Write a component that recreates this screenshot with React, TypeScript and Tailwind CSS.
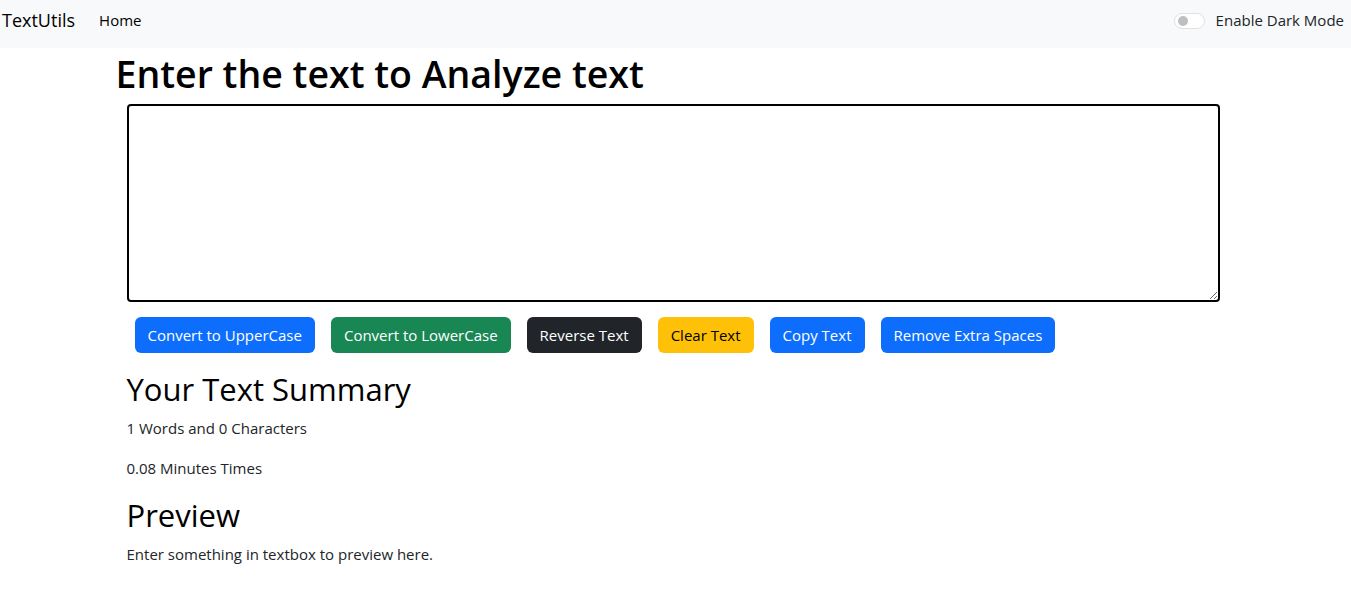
import { useState } from 'react'

const buttons = [
  { label: 'Convert to UpperCase', cls: 'bg-[#0d6efd] text-white' },
  { label: 'Convert to LowerCase', cls: 'bg-[#198754] text-white' },
  { label: 'Reverse Text', cls: 'bg-[#212529] text-white' },
  { label: 'Clear Text', cls: 'bg-[#ffc107] text-[#000]' },
  { label: 'Copy Text', cls: 'bg-[#0d6efd] text-white' },
  { label: 'Remove Extra Spaces', cls: 'bg-[#0d6efd] text-white' },
]

export default function App() {
  const [text, setText] = useState('')

  return (
    <div className="min-h-screen bg-white text-[#212529] font-['Open_Sans',sans-serif]">
      {/* Navbar */}
      <nav className="h-12 bg-[#f8f9fa] flex items-center justify-between pl-[2px] pr-[7px] pb-[7px]">
        <div className="flex items-center">
          <span className="text-[18px] text-black mr-[24px]">TextUtils</span>
          <span className="text-[15px] text-black">Home</span>
        </div>
        <div className="flex items-center gap-[11px]">
          <div className="w-[31px] h-[16px] rounded-full border border-[#dee2e6] bg-white flex items-center pl-[3px]">
            <div className="w-[10px] h-[10px] rounded-full bg-[#bfbfbf]" />
          </div>
          <span className="text-[15px] text-[#212529]">Enable Dark Mode</span>
        </div>
      </nav>

      {/* Main */}
      <div className="w-[1120px] mx-auto">
        <h1 className="text-[37.5px] font-semibold leading-[48px] mt-[2px] mb-[6px] text-black">
          Enter the text to Analyze text
        </h1>
        <div className="pl-[11px] pr-[16px]">
          <textarea
            value={text}
            onChange={e => setText(e.target.value)}
            className="block w-full h-[198px] border-2 border-black rounded-[4px] px-3 py-1.5 outline-none resize-y"
          />
          <div className="flex gap-4 mt-[15px] px-2">
            {buttons.map(b => (
              <button
                key={b.label}
                className={`h-9 px-[13px] rounded-[6px] text-[15px] ${b.cls}`}
              >
                {b.label}
              </button>
            ))}
          </div>

          <div className="mt-[17px]">
            <h2 className="text-[31px] leading-[38px] font-medium text-black mb-2">Your Text Summary</h2>
            <p className="text-[15px] leading-6 mb-4">1 Words and 0 Characters</p>
            <p className="text-[15px] leading-6 mb-4">0.08 Minutes Times</p>
            <h2 className="text-[31px] leading-[38px] font-medium text-black mb-2">Preview</h2>
            <p className="text-[15px] leading-6">{text.length > 0 ? text : 'Enter something in textbox to preview here.'}</p>
          </div>
        </div>
      </div>
    </div>
  )
}
